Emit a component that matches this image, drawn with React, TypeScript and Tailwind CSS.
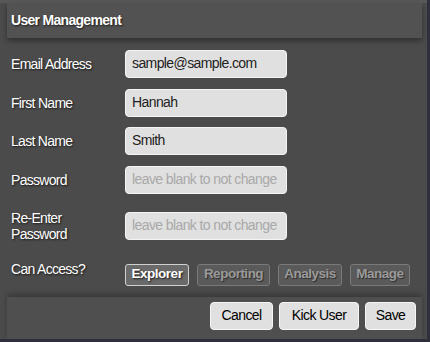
import React from "react";

const font = { fontFamily: '"Liberation Sans", Arial, sans-serif' };

function Label({ children }: { children: React.ReactNode }) {
  return (
    <div className="w-[114px] text-[14px] leading-[16px] text-white tracking-[-0.7px] [text-shadow:1px_1px_2px_rgba(0,0,0,0.7)]">
      {children}
    </div>
  );
}

function Field({ value, placeholder }: { value?: string; placeholder?: string }) {
  return (
    <div className="w-[162px] h-[28px] rounded-[4px] bg-[#e0e0e0] border border-[#f4f4f4] flex items-center px-[6px] text-[14px] tracking-[-0.6px]">
      {value ? (
        <span className="text-[#222]">{value}</span>
      ) : (
        <span className="text-[#a9a9a9]">{placeholder}</span>
      )}
    </div>
  );
}

function Access({ label, on, w }: { label: string; on?: boolean; w: string }) {
  return (
    <div
      className={
        "h-[22px] rounded-[3px] flex items-center justify-center text-[13.5px] font-bold tracking-[-0.5px] " +
        w +
        (on
          ? " bg-[#6a6a6a] border border-[#d0d0d0] text-white [text-shadow:1px_1px_2px_rgba(0,0,0,0.8)]"
          : " bg-[#5a5a5a] border border-[#7a7a7a] text-[#9a9a9a] [text-shadow:1px_1px_1px_rgba(0,0,0,0.5)]")
      }
    >
      {label}
    </div>
  );
}

function Btn({ label, w }: { label: string; w: string }) {
  return (
    <div
      className={
        "h-[28px] rounded-[4px] bg-[#e0e0e0] border border-[#f6f6f6] flex items-center justify-center text-[14px] text-black tracking-[-0.6px] " +
        w
      }
    >
      {label}
    </div>
  );
}

export default function App() {
  return (
    <div style={font} className="w-[430px] h-[342px] bg-[#30303c] overflow-hidden">
      <div className="w-[427px] h-[339px] bg-[#4b4b4b] border-t-[3px] border-[#585858] pl-[7px] pr-[5px] flex flex-col">
        <div className="h-[35px] bg-[#525252] shadow-[0_3px_5px_rgba(0,0,0,0.35)] flex items-center pl-[4px] text-[14px] font-bold text-white tracking-[-0.7px] [text-shadow:1px_1px_2px_rgba(0,0,0,0.7)] relative z-10">
          User Management
        </div>
        <div className="flex flex-col pl-[4px]">
          <div className="flex items-center mt-[12px]">
            <Label>Email Address</Label>
            <Field value="sample@sample.com" />
          </div>
          <div className="flex items-center mt-[11px]">
            <Label>First Name</Label>
            <Field value="Hannah" />
          </div>
          <div className="flex items-center mt-[10px]">
            <Label>Last Name</Label>
            <Field value="Smith" />
          </div>
          <div className="flex items-center mt-[11px]">
            <Label>Password</Label>
            <Field placeholder="leave blank to not change" />
          </div>
          <div className="flex items-center mt-[16px]">
            <Label>
              Re-Enter
              <br />
              Password
            </Label>
            <Field placeholder="leave blank to not change" />
          </div>
          <div className="flex items-start mt-[22px]">
            <div className="w-[114px] -mt-[3px]">
              <Label>Can Access?</Label>
            </div>
            <div className="flex gap-[8px]">
              <Access label="Explorer" on w="w-[64px]" />
              <Access label="Reporting" w="w-[73px]" />
              <Access label="Analysis" w="w-[64px]" />
              <Access label="Manage" w="w-[60px]" />
            </div>
          </div>
        </div>
        <div className="mt-[11px] h-[43px] bg-[#4f4f4f] shadow-[0_-3px_5px_rgba(0,0,0,0.25)] flex items-start justify-end gap-[6px] pt-[5px] pr-[6px]">
          <Btn label="Cancel" w="w-[63px]" />
          <Btn label="Kick User" w="w-[80px]" />
          <Btn label="Save" w="w-[51px]" />
        </div>
      </div>
    </div>
  );
}
